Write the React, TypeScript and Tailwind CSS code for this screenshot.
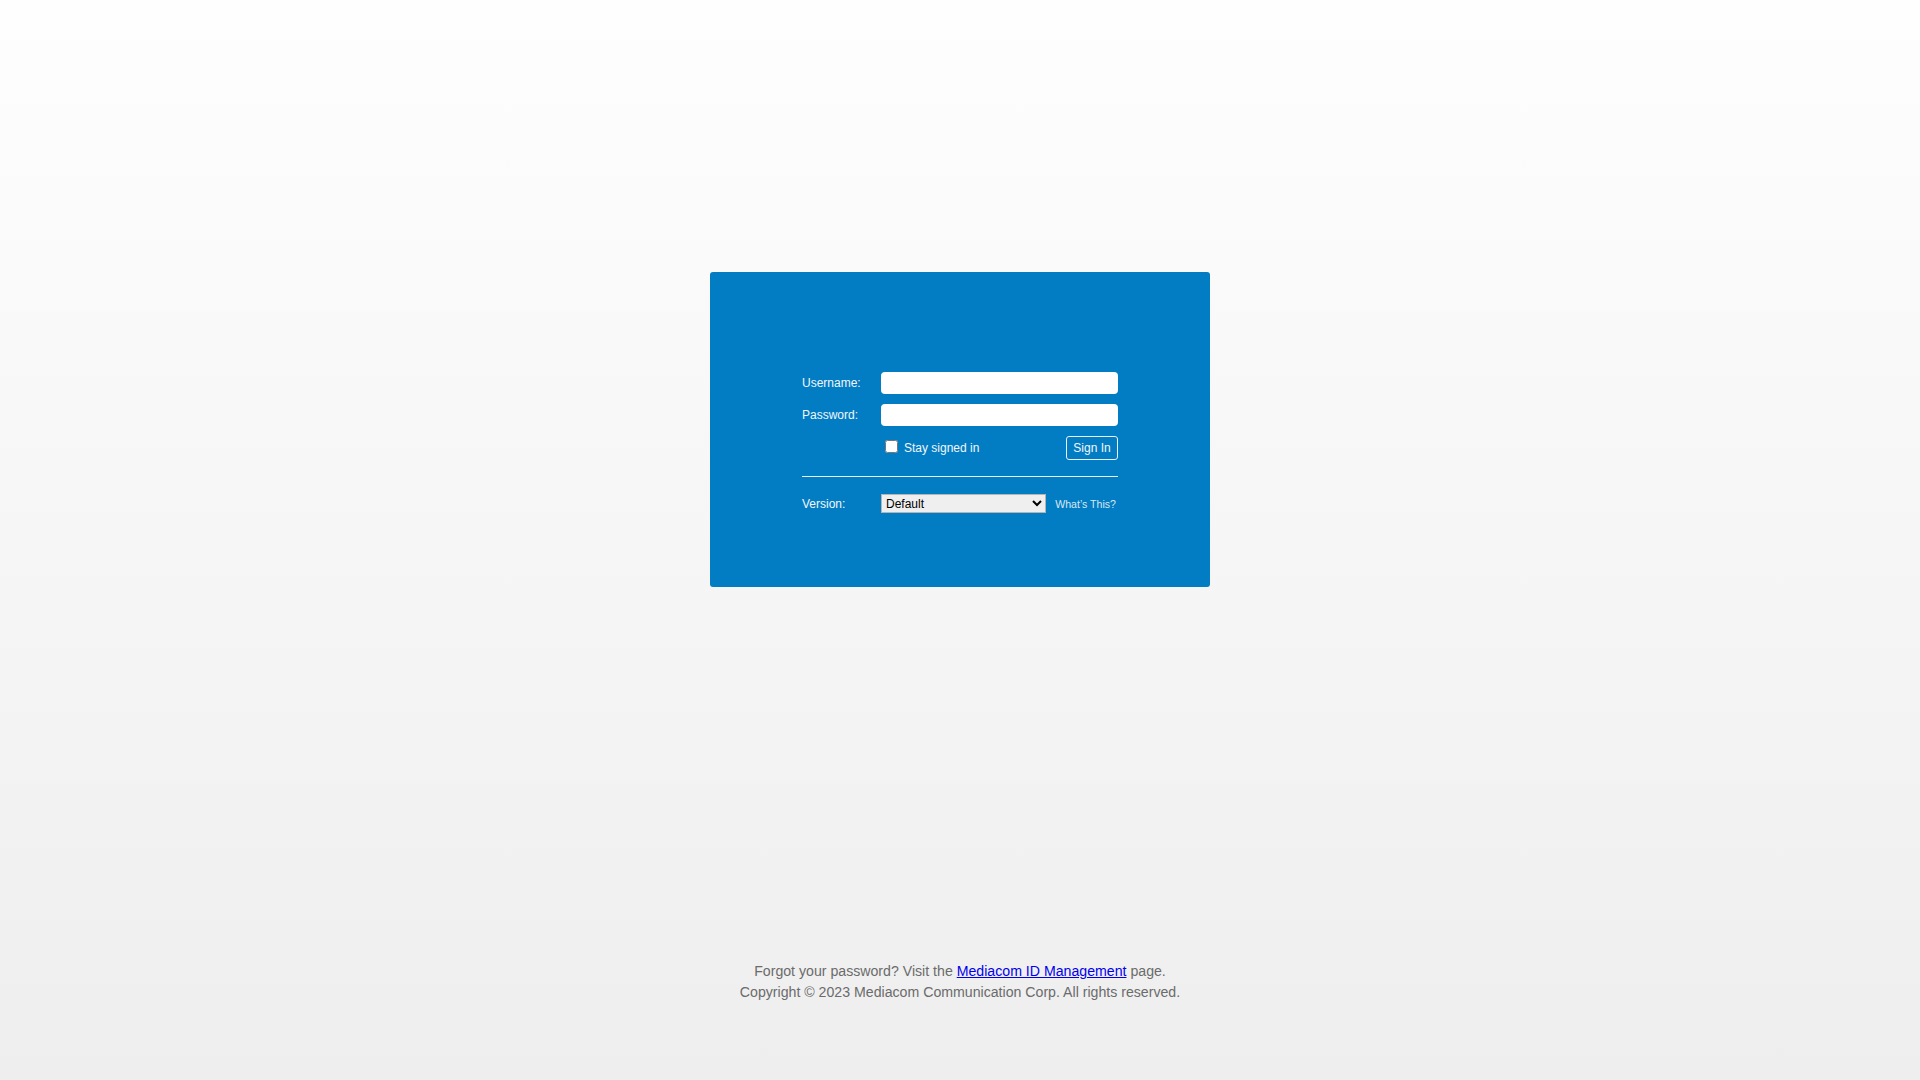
export default function App() {
  return (
    <div
      className="min-h-screen w-full bg-gradient-to-b from-[#fefefe] to-[#eeeeee] flex flex-col items-center"
      style={{ fontFamily: '"Liberation Sans", Arial, sans-serif' }}
    >
      <div className="mt-[272px] w-[500px] h-[315px] rounded-[3px] bg-[#027cc2] pt-[100px] px-[92px]">
        <form className="flex flex-col" onSubmit={(e) => e.preventDefault()}>
          <div className="flex items-center h-[22px]">
            <label className="w-[79px] text-[12px] text-[#f2f7fb]">Username:</label>
            <input type="text" className="w-[237px] h-[22px] rounded-[4px] bg-white outline-none px-1 text-[12px] text-black" />
          </div>
          <div className="flex items-center h-[22px] mt-[10px]">
            <label className="w-[79px] text-[12px] text-[#f2f7fb]">Password:</label>
            <input type="password" className="w-[237px] h-[22px] rounded-[4px] bg-white outline-none px-1 text-[12px] text-black" />
          </div>
          <div className="flex items-center h-[24px] mt-[10px] pl-[79px]">
            <label className="flex items-center text-[12px] text-[#f2f7fb]">
              <input type="checkbox" className="w-[13px] h-[13px] ml-[4px] mr-[6px] -mt-[4px]" />
              Stay signed in
            </label>
            <button
              type="submit"
              className="ml-auto w-[52px] h-[24px] rounded-[3px] border border-[#e8f1f8] text-[12px] text-[#f2f7fb] bg-transparent"
            >
              Sign In
            </button>
          </div>
          <div className="mt-[16px] h-px bg-[#e6f0f8]" />
          <div className="flex items-center h-[19px] mt-[17px]">
            <label className="w-[79px] text-[12px] text-[#f2f7fb]">Version:</label>
            <select
              defaultValue="default"
              className="w-[165px] h-[19px] border border-[#b5b5b5] bg-[#efefef] text-[12px] text-black pl-0"
            >
              <option value="default">Default</option>
              <option value="basic">Basic</option>
            </select>
            <a href="#" className="ml-auto mr-[2px] mt-[2px] text-[10.6px] text-[#d7e8f5]">
              What’s This?
            </a>
          </div>
        </form>
      </div>
      <div className="mt-[374px] text-center text-[14.15px] leading-[21px] text-[#6b6b6b]">
        <div>
          Forgot your password? Visit the{' '}
          <a href="#" className="text-[#0000ee] underline">Mediacom ID Management</a> page.
        </div>
        <div>Copyright © 2023 Mediacom Communication Corp. All rights reserved.</div>
      </div>
    </div>
  );
}
